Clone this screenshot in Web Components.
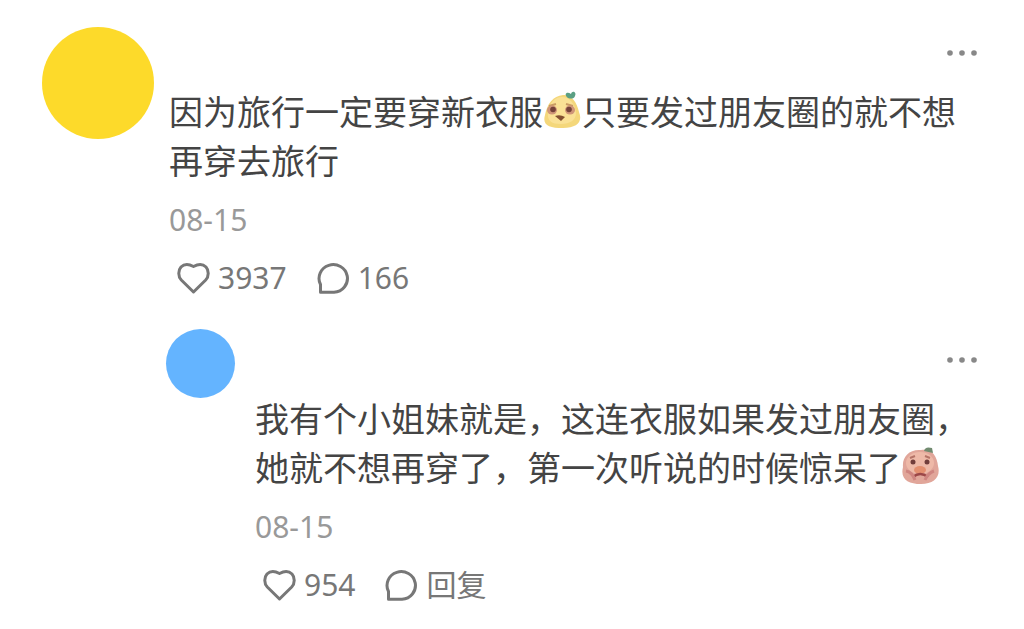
<!DOCTYPE html>
<html lang="zh-CN">
<head>
<meta charset="utf-8">
<meta name="viewport" content="width=device-width, initial-scale=1">
<title>评论</title>
<style>
  body { margin: 0; background: #fff; font-family: "Noto Sans", "Noto Sans CJK SC", sans-serif; color: #444; }
</style>
</head>
<body>
<comment-thread>
  <comment-item date="08-15" likes="3937" replies="166">因为旅行一定要穿新衣服<sticker-face kind="lemon"></sticker-face>只要发过朋友圈的就不想<wbr>再穿去旅行</comment-item>
  <comment-item nested date="08-15" likes="954" replies="回复">我有个小姐妹就是，这连衣服如果发过朋友圈，她就不想再穿了，第一次听说的时候惊呆了<sticker-face kind="peach"></sticker-face></comment-item>
</comment-thread>
<script>
class CommentThread extends HTMLElement {
  constructor() {
    super();
    this.attachShadow({ mode: "open" }).innerHTML = `
      <style>
        :host { display: block; }
        main { display: flex; flex-direction: column; gap: 33px; padding: 27px 46px 24px 42px; }
      </style>
      <main><slot></slot></main>`;
  }
}

class CommentItem extends HTMLElement {
  constructor() {
    super();
    this.attachShadow({ mode: "open" }).innerHTML = `
      <style>
        :host { --avatar: 112px; --fill: #fdda2a; --gap: 15px; --head: 59px; display: block; }
        :host([nested]) { --avatar: 69px; --fill: #64b4ff; --gap: 20px; --head: 64px; margin-left: 124px; }
        article { display: grid; grid-template-columns: var(--avatar) minmax(0, 1fr); column-gap: var(--gap); align-items: start; }
        .avatar { height: var(--avatar); border-radius: 50%; background: var(--fill); }
        header { display: flex; justify-content: flex-end; height: var(--head); }
        p { margin: 0; font-family: "Noto Sans CJK SC", sans-serif; font-size: 34px; line-height: 49px; }
        time { display: block; margin-top: 18px; font-size: 30px; line-height: 36px; color: #999; }
        footer { display: flex; gap: 30px; margin: 22px 0 0 8px; }
        button { display: flex; align-items: center; border: 0; padding: 0; background: none; font: inherit; color: #777; cursor: pointer; }
        .more { height: 52px; color: #888; }
        :host([nested]) .more { height: 62px; }
        .act { gap: 7px; font-size: 30px; line-height: 36px; }
        svg { display: block; fill: none; stroke: currentColor; stroke-width: 3; stroke-linejoin: round; }
        .more svg { fill: currentColor; stroke: none; }
      </style>
      <article>
        <div class="avatar"></div>
        <div>
          <header><button class="more" type="button" aria-label="更多"><svg width="32" height="8" viewBox="0 0 32 8"><circle cx="4" cy="4" r="2.8"/><circle cx="16" cy="4" r="2.8"/><circle cx="28" cy="4" r="2.8"/></svg></button></header>
          <p><slot></slot></p>
          <time></time>
          <footer>
            <button class="act like" type="button"><svg width="34" height="32" viewBox="0 0 34 32"><path d="M16.500 30 4.300 18C1 14.500 1 8.300 4 5C7 2 11.500 1.800 16.500 4.500C21.500 1.800 26 2 29 5C32 8.300 32 14.500 28.700 18Z"/></svg><span></span></button>
            <button class="act reply" type="button"><svg width="34" height="32" viewBox="0 0 34 32"><path d="M3.500 30.200V22.500A14.200 13.800 0 1 1 17 30.200Z"/></svg><span></span></button>
          </footer>
        </div>
      </article>`;
  }
  connectedCallback() {
    const find = s => this.shadowRoot.querySelector(s);
    find("time").textContent = this.getAttribute("date");
    find(".like span").textContent = this.getAttribute("likes");
    find(".reply span").textContent = this.getAttribute("replies");
  }
}

const faces = {
  lemon: `
    <path d="M20 5C28 4 34 12 36 22C40 32 34 38 20 38C6 38 -1 35 2 25C4 14 10 6 20 5Z" fill="#f4d77b"/>
    <path d="M19 7C27 7 32 14 33 23C33 30 27 34 18 34C9 34 4 31 5 23C6 13 12 7 19 7Z" fill="#fae195"/>
    <path d="M25 8C20 4 24 1 28 4C29 0 34 2 32 6C31 9 28 9 25 8Z" fill="#5a9f83"/>
    <path d="M6 16 13 14M23 14 30 16" stroke="#c99a62" stroke-width="2"/>
    <ellipse cx="9" cy="20" rx="5" ry="4.500" fill="#cf9578"/><ellipse cx="27" cy="20" rx="5" ry="4.500" fill="#cf9578"/>
    <circle cx="10" cy="19.500" r="2.800" fill="#744138"/><circle cx="26" cy="19.500" r="2.800" fill="#744138"/>
    <path d="M12 26Q17 24 22 27L18 31Z" fill="#825030"/>`,
  peach: `
    <path d="M20 4C30 2 36 9 37 20C40 31 33 38 20 38C7 38 -1 33 2 21C1 11 8 3 20 4Z" fill="#e1a69a"/>
    <ellipse cx="19" cy="17" rx="14" ry="11" fill="#eeb9a8"/>
    <path d="M23 5Q24 0 31 2L32 7Z" fill="#718b70"/>
    <path d="M9 12 14 10M24 10 29 12" stroke="#b57468" stroke-width="2"/>
    <circle cx="12" cy="16" r="2.500" fill="#713d3b"/><circle cx="26" cy="16" r="2.500" fill="#713d3b"/>
    <ellipse cx="19" cy="24" rx="6" ry="4" fill="#e38f70"/>
    <path d="M12 31Q19 25 27 31" fill="none" stroke="#9c4748" stroke-width="2.500"/>
    <path d="M5 25Q11 26 14 34M33 25Q27 27 24 34" fill="none" stroke="#cf8580" stroke-width="3"/>`
};

class StickerFace extends HTMLElement {
  connectedCallback() {
    if (this.shadowRoot) return;
    this.attachShadow({ mode: "open" }).innerHTML = `
      <style>
        :host { display: inline-block; width: 39px; height: 39px; vertical-align: -4px; line-height: 0; }
        svg { display: block; width: 100%; height: 100%; }
      </style>
      <svg viewBox="0 0 39 39" aria-hidden="true">${faces[this.getAttribute("kind")]}</svg>`;
  }
}

customElements.define("comment-thread", CommentThread);
customElements.define("comment-item", CommentItem);
customElements.define("sticker-face", StickerFace);
</script>
</body>
</html>
